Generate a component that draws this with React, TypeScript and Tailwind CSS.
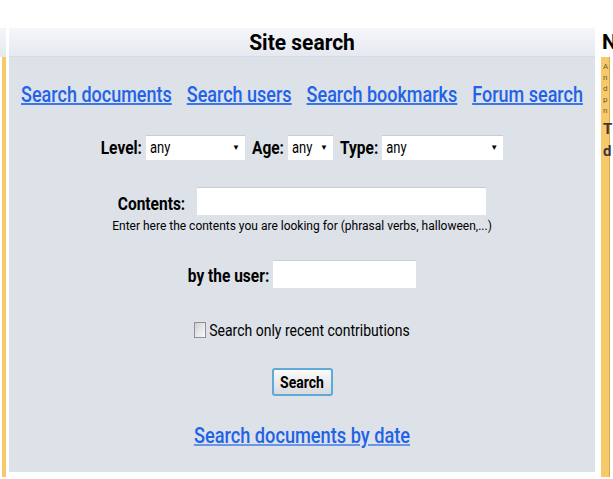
import { useState } from "react";

const font = "font-['Roboto','Liberation_Sans',sans-serif]";

function Select({ width }: { width: string }) {
  return (
    <div className={`relative ${width} h-[25px] bg-white border-t border-[#c9ccd2]`}>
      <select className="appearance-none w-full h-full bg-transparent pl-[4px] text-[13px] font-normal text-black outline-none scale-y-[1.25] origin-center">
        <option>any</option>
      </select>
      <span className="pointer-events-none absolute right-[5px] top-[7px] text-[8px] leading-[10px] text-black">▼</span>
    </div>
  );
}

export default function App() {
  const [recent, setRecent] = useState(false);

  return (
    <div className={`w-[613px] h-[479px] bg-white overflow-hidden pt-[28px] ${font}`}>
      <div className="flex h-[449px]">
        {/* left neighbour column */}
        <div className="w-[9px] flex flex-col">
          <div className="h-[29px] w-[6px] bg-gradient-to-b from-[#f4f5f9] to-[#e6e9f0]" />
          <div className="flex-1 w-[4px] ml-[2px] bg-[#f8c96a]" />
        </div>

        {/* main panel */}
        <div className="w-[586px] flex flex-col">
          <div className="h-[29px] flex items-center justify-center bg-gradient-to-b from-[#f6f7fa] to-[#e6e9f1] border-b border-[#d6dae2]">
            <h1 className="text-[21px] leading-[24px] font-bold text-black scale-y-[1.08]">Site search</h1>
          </div>
          <div className="h-[415px] bg-[#dde1e8] flex flex-col items-center whitespace-nowrap">
            <nav className="flex gap-[15px] mt-[26px] text-[18px] leading-[24px] font-medium text-[#1f63e6] underline">
              <a href="#" className="scale-y-[1.2]">Search documents</a>
              <a href="#" className="scale-y-[1.2]">Search users</a>
              <a href="#" className="scale-y-[1.2]">Search bookmarks</a>
              <a href="#" className="scale-y-[1.2]">Forum search</a>
            </nav>

            <div className="flex items-center mt-[28px] text-[15.5px] leading-[20px] font-bold text-black">
              <span className="scale-y-[1.15] mr-[4px]">Level:</span>
              <Select width="w-[99px]" />
              <span className="scale-y-[1.15] ml-[7px] mr-[4px]">Age:</span>
              <Select width="w-[45px]" />
              <span className="scale-y-[1.15] ml-[7px] mr-[4px]">Type:</span>
              <Select width="w-[121px]" />
            </div>

            <div className="flex items-center mt-[27px]">
              <label className="text-[15.5px] leading-[20px] font-bold text-black mr-[12px] mt-[6px] scale-y-[1.15]">
                Contents:
              </label>
              <input className="w-[289px] h-[28px] bg-white border-t border-[#c9ccd2] outline-none px-1" />
            </div>
            <p className="text-[12px] leading-[14px] text-black mt-[4px] scale-y-[1.1]">
              Enter here the contents you are looking for (phrasal verbs, halloween,...)
            </p>

            <div className="flex items-center mt-[27px]">
              <label className="text-[15.5px] leading-[20px] font-bold text-black mr-[4px] mt-[4px] scale-y-[1.15]">
                by the user:
              </label>
              <input className="w-[143px] h-[28px] bg-white border-t border-[#c9ccd2] outline-none px-1" />
            </div>

            <label className="flex items-center h-[20px] mt-[32px] text-[14px] leading-[20px] text-black">
              <input
                type="checkbox"
                checked={recent}
                onChange={(e) => setRecent(e.target.checked)}
                className="appearance-none w-[12px] h-[16px] mr-[3px] border border-[#8d9096] bg-gradient-to-br from-[#d0d1d4] to-[#fbfbfc]"
              />
              <span className="scale-y-[1.2]">Search only recent contributions</span>
            </label>

            <button className="mt-[28px] w-[61px] h-[28px] rounded-[3px] border-2 border-[#5fa9d6] bg-gradient-to-b from-[#fbfbfb] to-[#d9dadd] text-[14px] font-bold text-black">
              <span className="inline-block scale-y-[1.2]">Search</span>
            </button>

            <a href="#" className="mt-[28px] text-[18.2px] leading-[24px] font-medium text-[#1f63e6] underline scale-y-[1.2]">
              Search documents by date
            </a>
          </div>
        </div>

        {/* right neighbour column */}
        <div className="w-[6px]" />
        <div className="w-[12px] flex flex-col overflow-hidden">
          <div className="h-[29px] pl-[1px] flex items-center text-[21px] font-bold text-black">N</div>
          <div className="flex-1 w-[9px] bg-[#f8c96a] border-r border-[#d8a94a] pl-[2px] pt-[4px] text-[#6b5a3a] whitespace-nowrap">
            <div className="text-[8px] leading-[11px]">
              A<br />n<br />d<br />p<br />n
            </div>
            <div className="text-[15px] font-bold leading-[22px] text-[#3a3a3a] mt-[2px]">
              T<br />d
            </div>
          </div>
        </div>
      </div>
    </div>
  );
}
